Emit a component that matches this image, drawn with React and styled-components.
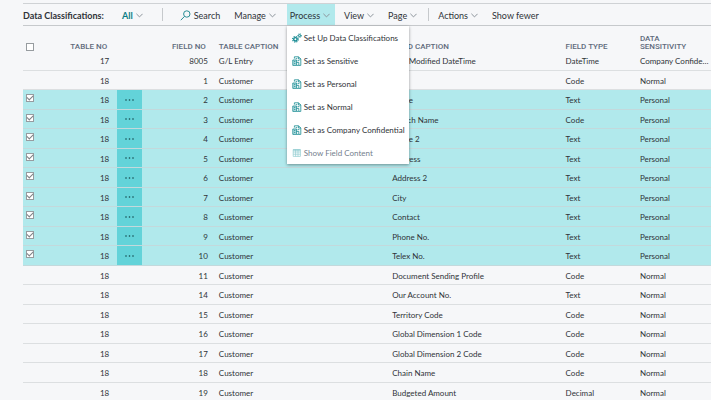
import React, { useState } from "react";
import styled, { createGlobalStyle } from "styled-components";

const GlobalStyle = createGlobalStyle`
  * {
    box-sizing: border-box;
  }
  body {
    margin: 0;
    background: white;
    color: #2f3338;
    font-family: Lato, "Noto Sans", sans-serif;
    font-size: 8px;
  }
  button {
    font: inherit;
    color: inherit;
    border: 0;
    background: none;
    cursor: pointer;
  }
`;

const Page = styled.main`
  height: calc(100vh - 2px);
  padding: 3px 0 0 23px;
  background: #f6f7f9;
  overflow: hidden;
`;

const Toolbar = styled.header`
  display: flex;
  align-items: stretch;
  height: 23px;
  border-top: 1px solid #cfd2d5;
  border-bottom: 1px solid #c6c9cc;
  font-size: 9px;
  white-space: nowrap;
`;

const Title = styled.h1`
  width: 96px;
  margin: 0;
  font-size: 9px;
  font-weight: 700;
  line-height: 23px;
`;

const ActionList = styled.ul`
  display: flex;
  gap: 6px;
  margin: 0;
  padding: 0;
  list-style: none;
`;

const ActionItem = styled.li`
  position: relative;
  display: flex;
`;

const ActionButton = styled.button`
  display: flex;
  align-items: center;
  gap: 3px;
  padding: 1px 5px 0 3px;
  background: ${(props) => (props.$open ? "#b1e9ec" : "none")};
  color: ${(props) => (props.$accent ? "#0a7d85" : "#2f3338")};
  font-weight: ${(props) => (props.$accent ? 700 : 400)};
  .chevron {
    width: 7px;
    height: 5px;
    color: #8c949b;
  }
  .search {
    width: 11px;
    height: 11px;
    color: #2a8f96;
  }
`;

const Divider = styled.li`
  width: 1px;
  height: 13px;
  margin: 4px ${(props) => (props.$wide ? 8 : 0)}px;
  background: #c6c9cc;
`;

const Menu = styled.ul`
  position: absolute;
  z-index: 1;
  top: 100%;
  left: 0;
  min-width: 122px;
  margin: 1px 0 0;
  padding: 0;
  list-style: none;
  background: white;
  box-shadow: 0 1px 3px rgba(0, 0, 0, 0.4);
`;

const MenuButton = styled.button`
  display: flex;
  align-items: center;
  gap: 2px;
  width: 100%;
  height: 23px;
  padding: 1px 3px 0 5px;
  font-size: 8px;
  &:disabled {
    color: #75808d;
    cursor: default;
  }
  svg {
    flex: none;
    width: 10px;
    height: 10px;
    color: #168a92;
  }
  &:disabled svg {
    color: #8fcbd0;
  }
`;

const Table = styled.table`
  width: 100%;
  table-layout: fixed;
  border-collapse: separate;
  border-spacing: 0;
  line-height: 11px;
  .check {
    width: 4%;
  }
  .table-no {
    width: 9.7%;
  }
  .more {
    width: 25px;
  }
  .field-no {
    width: 10.7%;
  }
  .caption {
    width: 25.2%;
  }
  .type {
    width: 10.8%;
  }
`;

const HeadCell = styled.th`
  height: 25px;
  padding: 0 ${(props) => (props.$right ? 10 : 8)}px 0
    ${(props) => (props.$right ? 0 : 3)}px;
  color: #5f6b7c;
  font-family: Roboto, sans-serif;
  font-size: 8px;
  font-weight: 500;
  line-height: 8px;
  text-align: ${(props) => (props.$right ? "right" : "left")};
  text-transform: uppercase;
  vertical-align: bottom;
`;

const Row = styled.tr`
  height: 19px;
  background: ${(props) => (props.$selected ? "#b1e9ec" : "none")};
  &:nth-child(odd) {
    height: 20px;
  }
`;

const Cell = styled.td`
  padding: 2px ${(props) => (props.$right ? 8 : 1)}px 0
    ${(props) => (props.$right ? 0 : 3)}px;
  border-bottom: 1px solid ${(props) => (props.$selected ? "#c3d9dc" : "#dcdfe1")};
  text-align: ${(props) => (props.$right ? "right" : "left")};
  white-space: nowrap;
  overflow: hidden;
  text-overflow: ellipsis;
`;

const CheckCell = styled(Cell)`
  padding: 4px 0 0 3px;
  vertical-align: top;
`;

const MoreCell = styled(Cell)`
  padding: 0;
  background: ${(props) => (props.$selected ? "#63d3d9" : "none")};
`;

const MoreButton = styled.button`
  display: flex;
  align-items: center;
  justify-content: center;
  width: 100%;
  height: 18px;
  padding: 0;
`;

const Checkbox = styled.input`
  appearance: none;
  display: block;
  width: 8px;
  height: 8px;
  margin: 0;
  border: 1px solid #979ca0;
  background: white;
  &:checked::after {
    content: "";
    display: block;
    width: 5px;
    height: 3px;
    border: solid #7d8286;
    border-width: 0 0 1px 1px;
    transform: rotate(-45deg);
  }
`;

const Chevron = () => (
  <svg className="chevron" viewBox="0 0 7 5" fill="none" stroke="currentColor">
    <path d="M0.4 0.8 3.5 3.9 6.6 0.8" />
  </svg>
);

const SearchIcon = () => (
  <svg className="search" viewBox="0 0 11 11" fill="none" stroke="currentColor">
    <circle cx="6.8" cy="4" r="3.2" />
    <path d="M4.5 6.4 0.8 10.2" />
  </svg>
);

const Dots = () => (
  <svg width="9" height="2" viewBox="0 0 9 2" fill="#14474b">
    <circle cx="1" cy="1" r="0.8" />
    <circle cx="4.5" cy="1" r="0.8" />
    <circle cx="8" cy="1" r="0.8" />
  </svg>
);

const GearsIcon = () => (
  <svg viewBox="0 0 10 10" fill="none" stroke="currentColor">
    <circle cx="3.4" cy="6.3" r="1.7" strokeWidth="1.4" />
    <circle cx="3.4" cy="6.3" r="2.8" strokeWidth="1.2" strokeDasharray="1.2 1" />
    <circle cx="7.6" cy="2.6" r="1" strokeWidth="1" />
    <circle cx="7.6" cy="2.6" r="1.8" strokeWidth="1" strokeDasharray="0.9 0.7" />
  </svg>
);

const ClassifyIcon = () => (
  <svg viewBox="0 0 10 10" fill="none" stroke="currentColor" strokeWidth="0.8">
    <path d="M2.4 2.6V0.8H6.6L8.8 3V9.4H6.8" />
    <path d="M6.4 0.8V3H8.8" />
    <path d="M0.8 9.4V4H4.6V9.4Z" fill="#b9dfe2" />
    <path d="M2 5.6H3.4M2 7.4H3.4" />
    <path d="M4.6 6.4H6.8V9.4H4.6" />
    <path d="M3.6 2.6H5.2M5.6 4.6H7.4" />
  </svg>
);

const GridIcon = () => (
  <svg viewBox="0 0 10 10" fill="none" stroke="currentColor" strokeWidth="0.7">
    <path d="M1.2 1.6H8.4V8.4H1.2ZM1.2 4H8.4M1.2 6.2H8.4M3.6 1.6V8.4M6 1.6V8.4" />
    <path d="M1.2 2H8.4" strokeWidth="1.2" />
  </svg>
);

const menuItems = [
  { label: "Set Up Data Classifications", icon: GearsIcon },
  { label: "Set as Sensitive", icon: ClassifyIcon },
  { label: "Set as Personal", icon: ClassifyIcon },
  { label: "Set as Normal", icon: ClassifyIcon },
  { label: "Set as Company Confidential", icon: ClassifyIcon },
  { label: "Show Field Content", icon: GridIcon, disabled: true },
];

const fields = [
  [17, 8005, "G/L Entry", "Last Modified DateTime", "DateTime", "Company Confidential"],
  [18, 1, "Customer", "No.", "Code", "Normal"],
  [18, 2, "Customer", "Name", "Text", "Personal"],
  [18, 3, "Customer", "Search Name", "Code", "Personal"],
  [18, 4, "Customer", "Name 2", "Text", "Personal"],
  [18, 5, "Customer", "Address", "Text", "Personal"],
  [18, 6, "Customer", "Address 2", "Text", "Personal"],
  [18, 7, "Customer", "City", "Text", "Personal"],
  [18, 8, "Customer", "Contact", "Text", "Personal"],
  [18, 9, "Customer", "Phone No.", "Text", "Personal"],
  [18, 10, "Customer", "Telex No.", "Text", "Personal"],
  [18, 11, "Customer", "Document Sending Profile", "Code", "Normal"],
  [18, 14, "Customer", "Our Account No.", "Text", "Normal"],
  [18, 15, "Customer", "Territory Code", "Code", "Normal"],
  [18, 16, "Customer", "Global Dimension 1 Code", "Code", "Normal"],
  [18, 17, "Customer", "Global Dimension 2 Code", "Code", "Normal"],
  [18, 18, "Customer", "Chain Name", "Code", "Normal"],
  [18, 19, "Customer", "Budgeted Amount", "Decimal", "Normal"],
];

function DropDown({ label, open, accent, onClick, children }) {
  return (
    <ActionItem>
      <ActionButton $open={open} $accent={accent} aria-expanded={!!open} onClick={onClick}>
        {label}
        <Chevron />
      </ActionButton>
      {open && children}
    </ActionItem>
  );
}

function FieldRow({ field, selected, onToggle }) {
  const [tableNo, fieldNo, tableCaption, fieldCaption, type, sensitivity] = field;
  return (
    <Row $selected={selected}>
      <CheckCell $selected={selected}>
        {selected && (
          <Checkbox
            type="checkbox"
            aria-label={"Select field " + fieldNo}
            checked
            onChange={onToggle}
          />
        )}
      </CheckCell>
      <Cell $right $selected={selected}>{tableNo}</Cell>
      <MoreCell $selected={selected}>
        {selected && (
          <MoreButton aria-label="Show more options">
            <Dots />
          </MoreButton>
        )}
      </MoreCell>
      <Cell $right $selected={selected}>{fieldNo}</Cell>
      <Cell $selected={selected}>{tableCaption}</Cell>
      <Cell $selected={selected}>{fieldCaption}</Cell>
      <Cell $selected={selected}>{type}</Cell>
      <Cell $selected={selected}>{sensitivity}</Cell>
    </Row>
  );
}

function App() {
  const [menuOpen, setMenuOpen] = useState(true);
  const [selected, setSelected] = useState([2, 3, 4, 5, 6, 7, 8, 9, 10]);

  const toggle = (no) => setSelected(selected.filter((item) => item !== no));

  return (
    <Page>
      <GlobalStyle />
      <Toolbar>
        <Title>Data Classifications:</Title>
        <ActionList>
          <DropDown label="All" accent />
          <Divider $wide />
          <ActionItem>
            <ActionButton>
              <SearchIcon />
              Search
            </ActionButton>
          </ActionItem>
          <DropDown label="Manage" />
          <DropDown label="Process" open={menuOpen} onClick={() => setMenuOpen(!menuOpen)}>
            <Menu>
              {menuItems.map(({ label, icon: Icon, disabled }) => (
                <li key={label}>
                  <MenuButton disabled={disabled}>
                    <Icon />
                    {label}
                  </MenuButton>
                </li>
              ))}
            </Menu>
          </DropDown>
          <DropDown label="View" />
          <DropDown label="Page" />
          <Divider />
          <DropDown label="Actions" />
          <ActionItem>
            <ActionButton>Show fewer</ActionButton>
          </ActionItem>
        </ActionList>
      </Toolbar>
      <Table>
        <colgroup>
          <col className="check" />
          <col className="table-no" />
          <col className="more" />
          <col className="field-no" />
          <col className="caption" />
          <col className="caption" />
          <col className="type" />
          <col />
        </colgroup>
        <thead>
          <tr>
            <HeadCell>
              <Checkbox type="checkbox" aria-label="Select all" />
            </HeadCell>
            <HeadCell $right>Table No</HeadCell>
            <HeadCell />
            <HeadCell $right>Field No</HeadCell>
            <HeadCell>Table Caption</HeadCell>
            <HeadCell>Field Caption</HeadCell>
            <HeadCell>Field Type</HeadCell>
            <HeadCell>Data Sensitivity</HeadCell>
          </tr>
        </thead>
        <tbody>
          {fields.map((field) => (
            <FieldRow
              key={field[0] + "-" + field[1]}
              field={field}
              selected={selected.includes(field[1])}
              onToggle={() => toggle(field[1])}
            />
          ))}
        </tbody>
      </Table>
    </Page>
  );
}

export default App;
